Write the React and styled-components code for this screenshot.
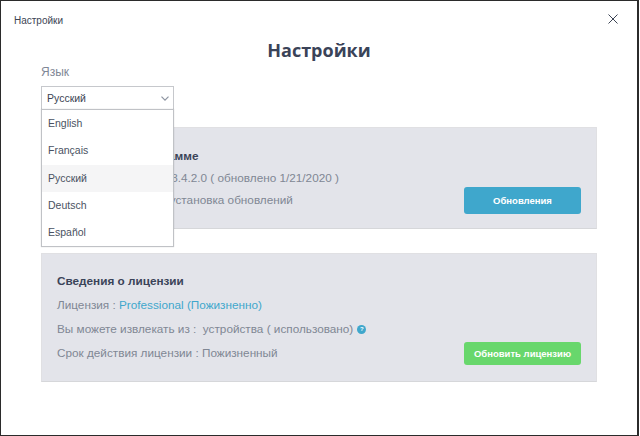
import React from 'react';
import styled, { createGlobalStyle } from 'styled-components';

const GlobalStyle = createGlobalStyle`
  html, body {
    margin: 0;
    padding: 0;
    background: #fff;
    font-family: "Liberation Sans", Arial, sans-serif;
  }
`;

const Window = styled.div`
  box-sizing: border-box;
  width: 639px;
  height: 436px;
  border: 1px solid #2b2b2b;
  border-right-width: 2px;
  background: #fff;
  display: flex;
  flex-direction: column;
`;

const TitleBar = styled.div`
  display: flex;
  justify-content: space-between;
  align-items: center;
  height: 36px;
  padding: 0 19px 0 13px;
  font-size: 10px;
  color: #3c4454;
`;

const TitleText = styled.span`
  padding-top: 2px;
`;

const CloseIcon = styled.svg`
  width: 10px;
  height: 10px;
  stroke: #3c4454;
  stroke-width: 1;
  fill: none;
`;

const Heading = styled.h1`
  margin: 0;
  text-align: center;
  font-family: "Open Sans", sans-serif;
  font-size: 18px;
  line-height: 26px;
  font-weight: 700;
  color: #3a4358;
`;

const Content = styled.div`
  display: flex;
  flex-direction: column;
  padding: 2px 40px 0;
`;

const FieldLabel = styled.div`
  font-size: 12px;
  line-height: 14px;
  color: #7f8796;
  margin-bottom: 7px;
`;

const SelectWrap = styled.div`
  position: relative;
  width: 133px;
  margin-bottom: 17px;
`;

const SelectBox = styled.div`
  box-sizing: border-box;
  height: 24px;
  display: flex;
  align-items: center;
  justify-content: space-between;
  padding: 0 4px 0 5px;
  border: 1px solid #c6c8cc;
  background: #fff;
  font-size: 10.5px;
  color: #3c4454;
`;

const Chevron = styled.svg`
  width: 8px;
  height: 5px;
  stroke: #8d94a1;
  stroke-width: 1.2;
  fill: none;
`;

const Menu = styled.ul`
  position: absolute;
  top: 23px;
  left: 0;
  z-index: 2;
  box-sizing: border-box;
  width: 133px;
  height: 138px;
  margin: 0;
  padding: 0;
  list-style: none;
  background: #fff;
  border: 1px solid #c0c2c6;
  box-shadow: 0 0 1px rgba(0, 0, 0, 0.2);
`;

const MenuItem = styled.li`
  box-sizing: border-box;
  height: 27.3px;
  display: flex;
  align-items: center;
  padding: 0 0 1px 6px;
  font-size: 10.5px;
  color: #4a5262;
  background: ${p => (p.$active ? '#f5f5f6' : 'transparent')};
`;

const Panel = styled.section`
  box-sizing: border-box;
  display: flex;
  justify-content: space-between;
  height: ${p => p.$height}px;
  margin-bottom: 24px;
  padding: ${p => p.$top}px 15px ${p => p.$bottom}px;
  background: #e3e4ea;
  border: 1px solid #e0e0e3;
  border-bottom-color: #d6d7da;
`;

const PanelInfo = styled.div`
  display: flex;
  flex-direction: column;
  gap: ${p => p.$gap}px;
`;

const PanelTitle = styled.div`
  font-size: 11.75px;
  line-height: 14px;
  font-weight: 700;
  color: #3a4358;
  white-space: pre;
`;

const PanelRow = styled.div`
  display: flex;
  align-items: center;
  gap: 4px;
  font-size: 11.75px;
  line-height: 14px;
  color: #808794;
  white-space: pre;
`;

const Accent = styled.span`
  color: #3fa7cc;
`;

const HelpDot = styled.span`
  width: 9px;
  height: 9px;
  border-radius: 50%;
  background: #3fa7cc;
  color: #fff;
  font-size: 6px;
  line-height: 9px;
  font-weight: 700;
  text-align: center;
`;

const ActionButton = styled.button`
  align-self: flex-end;
  flex: none;
  width: 117px;
  height: ${p => p.$h}px;
  padding: 0;
  border: 0;
  border-radius: 3px;
  background: ${p => p.$color};
  color: #fff;
  font-family: "Liberation Sans", Arial, sans-serif;
  font-size: 9.5px;
  font-weight: 700;
  white-space: nowrap;
`;

const languages = ['English', 'Français', 'Русский', 'Deutsch', 'Español'];

const App = () => (
  <>
    <GlobalStyle />
    <Window>
      <TitleBar>
        <TitleText>Настройки</TitleText>
        <CloseIcon viewBox="0 0 10 10">
          <path d="M0.5 0.5L9.5 9.5M9.5 0.5L0.5 9.5" />
        </CloseIcon>
      </TitleBar>
      <Heading>Настройки</Heading>
      <Content>
        <FieldLabel>Язык</FieldLabel>
        <SelectWrap>
          <SelectBox>
            <span>Русский</span>
            <Chevron viewBox="0 0 8 5">
              <path d="M0.5 0.6L4 4.1L7.5 0.6" />
            </Chevron>
          </SelectBox>
          <Menu>
            {languages.map(lang => (
              <MenuItem key={lang} $active={lang === 'Русский'}>
                {lang}
              </MenuItem>
            ))}
          </Menu>
        </SelectWrap>
        <Panel $height={102} $top={21} $bottom={14}>
          <PanelInfo $gap={8}>
            <PanelTitle>Сведения  о  программе</PanelTitle>
            <PanelRow>Версия программы : 8.4.2.0 ( обновлено 1/21/2020 )</PanelRow>
            <PanelRow>Загрузка  пакетов  и установка обновлений</PanelRow>
          </PanelInfo>
          <ActionButton $color="#3fa7cc" $h={27}>Обновления</ActionButton>
        </Panel>
        <Panel $height={129} $top={20} $bottom={16}>
          <PanelInfo $gap={10}>
            <PanelTitle>Сведения о лицензии</PanelTitle>
            <PanelRow>
              <span>Лицензия : <Accent>Professional (Пожизненно)</Accent></span>
            </PanelRow>
            <PanelRow>
              <span>Вы можете извлекать из :  устройства ( использовано)</span>
              <HelpDot>?</HelpDot>
            </PanelRow>
            <PanelRow>Срок действия лицензии : Пожизненный</PanelRow>
          </PanelInfo>
          <ActionButton $color="#68d76c" $h={23}>Обновить лицензию</ActionButton>
        </Panel>
      </Content>
    </Window>
  </>
);

export default App;
